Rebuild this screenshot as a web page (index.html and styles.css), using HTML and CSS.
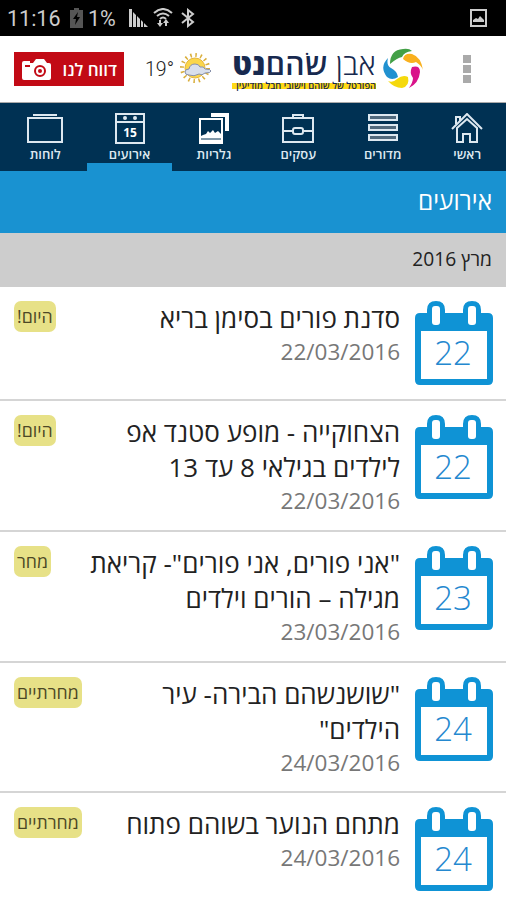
FILE: index.html
```html
<!DOCTYPE html>
<html lang="he" dir="rtl">

<head>
    <meta charset="utf-8">
    <meta name="viewport" content="width=device-width, initial-scale=1">
    <title>אבן שוהם נט</title>
    <link rel="stylesheet" href="styles.css">
</head>

<body>
    <!-- Calendar shape shared by all events -->
    <svg class="defs" width="0" height="0">
        <symbol id="calendar" viewBox="0 0 78 84">
            <path fill="#0f93d5" d="M5 12H12V9Q12 0 21 0Q30 0 30 9V12H48V9Q48 0 57 0Q66 0 66 9V12H73Q78 12 78 17V79Q78 84 73 84H5Q0 84 0 79V17Q0 12 5 12Z" />
            <path fill="#fff" d="M6 30H72V78H6Z" />
            <rect fill="#fff" x="17" y="5" width="8" height="19" rx="3" />
            <rect fill="#fff" x="53" y="5" width="8" height="19" rx="3" />
        </symbol>
    </svg>

    <!-- Phone status bar -->
    <div class="status-bar" dir="ltr">
        <span class="clock">11:16</span>
        <svg class="battery" width="13" height="20" viewBox="0 0 13 20">
            <path fill="#555" d="M4 0h5v2h4v18H0V2h4z" />
            <path fill="#000" d="M8 4L3 11h3l-1 6 5-8H7z" />
        </svg>
        <span class="percent">1%</span>
        <svg class="signal" width="19" height="18" viewBox="0 0 19 18">
            <path fill="#ccc" d="M0 0h3v18H0zM4 3l3 3v12H4zM8 7l3 3v8H8zM12 11l2 2v5h-2zM15 14l4 4h-4z" />
        </svg>
        <svg class="wifi" width="20" height="20" viewBox="0 0 20 20" fill="none" stroke="#ccc" stroke-width="2">
            <path d="M1 5Q10-3 19 5M4 8Q10 3 16 8M7 11Q10 8 13 11" />
            <path fill="#ccc" stroke="none" d="M4 15h2v-3h2v3h2l-3 4zM10 15l3-4 3 4h-2v3h-2v-3z" />
        </svg>
        <svg class="bluetooth" width="14" height="20" viewBox="0 0 14 20" fill="none" stroke="#ccc" stroke-width="2">
            <path d="M1 5l11 9-5 4V2l5 4-11 9" />
        </svg>
        <svg class="picture" width="17" height="18" viewBox="0 0 17 18">
            <rect x="1" y="1" width="15" height="16" fill="none" stroke="#ccc" stroke-width="2" />
            <path fill="#ccc" d="M3 13V11l3-2 2 1 2-3 4 4v2z" />
        </svg>
    </div>

    <!-- Logo, weather and report button -->
    <header class="header" dir="ltr">
        <div class="report">
            <svg width="29" height="21" viewBox="0 0 29 21">
                <path fill="#fff" d="M2 2h6v2h3l3-4h8l3 4h2q2 0 2 2v13q0 2-2 2H2q-2 0-2-2V4q0-2 2-2z" />
                <path fill="#c20a15" d="M3 6h5v2H3z" />
                <circle cx="18" cy="12" r="5" fill="#fff" stroke="#c20a15" stroke-width="2" />
                <circle cx="18" cy="12" r="2" fill="#c20a15" />
            </svg>
            <span dir="rtl">דווח לנו</span>
        </div>
        <span class="degrees">19°</span>
        <svg class="weather" width="32" height="32" viewBox="0 0 32 32">
            <circle cx="15" cy="15" r="13" fill="none" stroke="#d9ae3b" stroke-width="4" stroke-dasharray="1.5 3.6" />
            <circle cx="15" cy="15" r="10" fill="#fbd64b" stroke="#e5b53c" />
            <path fill="#d9dfec" stroke="#8790aa" d="M9 22q-4 0-4-3t4-3q1-5 6-5 4 0 5 3 4-1 5 2 6 0 6 2t-6 2q-3 3-6 1-5 3-10 1z" />
        </svg>
        <div class="brand" dir="rtl">
            <div class="brand-name">אבן <b>שׂהם</b><strong>נט</strong></div>
            <div class="brand-line">הפורטל של שוהם וישובי חבל מודיעין</div>
        </div>
        <svg class="swirl" width="42" height="42" viewBox="0 0 42 42">
            <path fill="#43a047" d="M8 16Q8 2 21 1Q27 0 30 3Q22 4 20 9Q15 10 8 16Z" />
            <path fill="#f9b01e" d="M21 11Q22 5 30 6Q39 9 41 22Q39 17 34 14Q28 17 21 11Z" />
            <path fill="#d9138a" d="M30 19Q38 17 38 24Q37 35 27 40Q31 34 31 30Q27 25 30 19Z" />
            <path fill="#f5d90c" d="M26 29Q28 38 20 40Q12 40 6 33Q11 35 15 31Q21 26 26 29Z" />
            <path fill="#2191d0" d="M6 10Q4 17 9 20Q15 23 16 29Q10 33 5 29Q-3 19 6 10Z" />
        </svg>
        <div class="menu"><i></i><i></i><i></i></div>
    </header>

    <!-- Main tabs -->
    <nav class="tabs" dir="ltr">
        <div class="tab">
            <svg width="36" height="31" viewBox="0 0 36 31" fill="none" stroke="#dde8f0" stroke-width="2">
                <path d="M6 2H30M1 5H35V29H1Z" />
            </svg>
            <span>לוחות</span>
        </div>
        <div class="tab active">
            <svg width="30" height="31" viewBox="0 0 30 31" fill="none" stroke="#dde8f0" stroke-width="2">
                <path d="M1 1H29V30H1ZM1 9H29" />
                <circle cx="10" cy="5" r="1" />
                <circle cx="20" cy="5" r="1" />
                <text class="tab-day" x="15" y="24" text-anchor="middle">15</text>
            </svg>
            <span>אירועים</span>
        </div>
        <div class="tab">
            <svg width="30" height="31" viewBox="0 0 30 31">
                <path fill="#fff" d="M12 0h18v18h-4V4H12zM0 5h24v26H0z" />
                <path fill="#003153" d="M2 7h20v14l-1-1-2-2-3 2-2-3-3 3-2-2-2 3-3 1-2 1z" />
                <path stroke="#003153" d="M2 26H22" />
            </svg>
            <span>גלריות</span>
        </div>
        <div class="tab">
            <svg width="32" height="31" viewBox="0 0 32 31" fill="none" stroke="#dde8f0" stroke-width="2">
                <path d="M1 5H31V29H1ZM11 5V2H21V5M1 18H11M21 18H31" />
                <rect x="11" y="15" width="10" height="6" rx="2" />
            </svg>
            <span>עסקים</span>
        </div>
        <div class="tab">
            <svg width="30" height="31" viewBox="0 0 30 31" fill="#50697d" stroke="#dde8f0" stroke-width="2">
                <path d="M1 2H29V7H1ZM1 12H29V17H1ZM1 22H29V27H1Z" />
            </svg>
            <span>מדורים</span>
        </div>
        <div class="tab">
            <svg width="32" height="31" viewBox="0 0 32 31" fill="none" stroke="#dde8f0" stroke-width="2">
                <path d="M1 16L16 1L31 16M5 11V4H9V8M6 15V29H12V21H19V29H26V15L16 6Z" />
            </svg>
            <span>ראשי</span>
        </div>
    </nav>

    <h1 class="page-title">אירועים</h1>
    <h2 class="month">מרץ 2016</h2>

    <!-- Events list -->
    <div class="events">
        <div class="event">
            <div class="calendar"><svg width="78" height="84"><use href="#calendar" /></svg><span>22</span></div>
            <div class="details">
                <div class="name">סדנת פורים בסימן בריא</div>
                <div class="date">22/03/2016</div>
            </div>
            <div class="badge">היום!</div>
        </div>
        <div class="event">
            <div class="calendar"><svg width="78" height="84"><use href="#calendar" /></svg><span>22</span></div>
            <div class="details">
                <div class="name">הצחוקייה - מופע סטנד אפ<br>לילדים בגילאי 8 עד 13</div>
                <div class="date">22/03/2016</div>
            </div>
            <div class="badge">היום!</div>
        </div>
        <div class="event">
            <div class="calendar"><svg width="78" height="84"><use href="#calendar" /></svg><span>23</span></div>
            <div class="details">
                <div class="name">"אני פורים, אני פורים"- קריאת<br>מגילה – הורים וילדים</div>
                <div class="date">23/03/2016</div>
            </div>
            <div class="badge">מחר</div>
        </div>
        <div class="event">
            <div class="calendar"><svg width="78" height="84"><use href="#calendar" /></svg><span>24</span></div>
            <div class="details">
                <div class="name">"שושנשהם הבירה- עיר<br>הילדים"</div>
                <div class="date">24/03/2016</div>
            </div>
            <div class="badge">מחרתיים</div>
        </div>
        <div class="event">
            <div class="calendar"><svg width="78" height="84"><use href="#calendar" /></svg><span>24</span></div>
            <div class="details">
                <div class="name">מתחם הנוער בשוהם פתוח</div>
                <div class="date">24/03/2016</div>
            </div>
            <div class="badge">מחרתיים</div>
        </div>
    </div>
</body>

</html>
```

FILE: styles.css
```css
body {
    background-color: #fff;
    color: #222;
    font-family: "Open Sans", "Noto Sans", sans-serif;
    margin: 0;
    height: 900px;
    overflow: hidden;
}

svg {
    display: block;
    flex: none;
}

.defs {
    display: none;
}

.status-bar {
    display: flex;
    align-items: center;
    height: 36px;
    padding: 0 19px 0 7px;
    box-sizing: border-box;
    background-color: #000;
    color: #ccc;
    font-family: Roboto, sans-serif;
    font-size: 21.5px;
}

.clock {
    width: 63px;
}

.percent {
    width: 41px;
    padding-left: 5px;
}

.wifi {
    margin-left: 5px;
}

.bluetooth {
    margin-left: 8px;
}

.picture {
    margin-left: auto;
}

.header {
    display: flex;
    height: 67px;
    box-sizing: border-box;
    border-bottom: 1px solid #aaa;
    white-space: nowrap;
}

.report {
    display: flex;
    align-items: center;
    justify-content: space-between;
    width: 110px;
    height: 34px;
    margin: 16px 0 0 14px;
    padding: 0 7px 0 8px;
    box-sizing: border-box;
    background-color: #c20a15;
    color: #fff;
    font-size: 17px;
    font-weight: 600;
}

.degrees {
    width: 34px;
    margin: 22px 0 0 21px;
    font-family: Roboto, sans-serif;
    font-size: 19.5px;
    font-weight: 300;
}

.weather {
    margin: 17px 0 0 1px;
}

.brand {
    width: 144px;
    margin: 9px 0 0 20px;
    color: #17294f;
}

.brand-name {
    height: 36px;
    font-size: 30px;
    line-height: 38px;
    font-weight: 300;
    letter-spacing: 0.3px;
}

.brand-name b {
    font-weight: 600;
}

.brand-name strong {
    font-weight: 800;
}

.brand-line {
    height: 8px;
    background: linear-gradient(#ffda16, #ffda16) 0 2px / 100% 6px no-repeat;
    font-size: 9.3px;
    line-height: 9px;
    font-weight: 600;
}

.swirl {
    margin: 12px 0 0 6px;
}

.menu {
    display: flex;
    flex-direction: column;
    gap: 2px;
    margin: 19px 0 0 39px;
}

.menu i {
    width: 8px;
    height: 8px;
    background-color: #aaa;
}

.tabs {
    display: flex;
    height: 68px;
    padding-left: 3px;
    overflow: hidden;
    background-color: #003153;
    color: #dde8f0;
}

.tab {
    display: flex;
    flex: none;
    flex-direction: column;
    align-items: center;
    width: 84.4px;
    padding-top: 10px;
    box-sizing: border-box;
    font-size: 13px;
    font-weight: 600;
    line-height: 21px;
}

.active {
    border-bottom: 8px solid #1992d1;
}

.tab-day {
    fill: #fff;
    stroke: none;
    font-size: 12px;
    font-weight: 700;
}

.page-title {
    height: 62px;
    margin: 0;
    padding: 0 14px;
    background-color: #1992d1;
    color: #fff;
    font-size: 24.4px;
    font-weight: 400;
    line-height: 60px;
}

.month {
    height: 54px;
    margin: 0;
    padding: 0 14px;
    background-color: #cdcdcd;
    font-size: 19.2px;
    font-weight: 400;
    line-height: 52px;
}

.event {
    display: flex;
    align-items: flex-start;
    padding: 14px 13px 14px 14px;
    border-bottom: 2px solid #d5d5d5;
}

.calendar {
    display: grid;
    height: 84px;
}

.calendar svg,
.calendar span {
    grid-area: 1 / 1;
}

.calendar span {
    padding: 29px 2px 0 0;
    color: #2488cf;
    font-size: 33px;
    font-weight: 350;
    line-height: 46px;
    text-align: center;
}

.details {
    flex: 1;
    margin: 0 15px -1.25px 0;
    white-space: nowrap;
}

.name {
    font-size: 26px;
    line-height: 35px;
}

.date {
    color: #777;
    font-size: 22.5px;
    font-weight: 370;
    line-height: 32px;
}

.badge {
    height: 31px;
    padding: 0 3px;
    border-radius: 7px;
    background-color: #e7e187;
    color: #4c4826;
    font-size: 17.7px;
    line-height: 31px;
}
```
